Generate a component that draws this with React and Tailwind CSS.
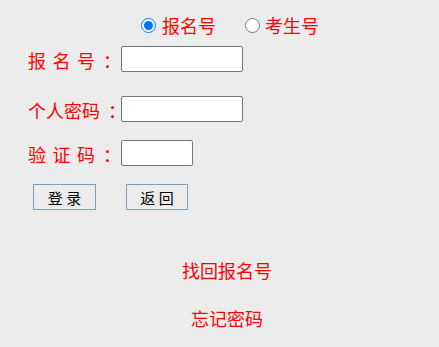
import { useState } from 'react';

// login form for the exam registration page
const Field = ({ chars, inputWidth }) => (
  <div className="flex items-center">
    <div className="flex items-center w-[93px] pt-[2px] text-[18px] leading-[18px] text-[#ff0000]">
      <div className="flex justify-between w-[72px]">
        {chars.map((c) => (
          <span key={c}>{c}</span>
        ))}
      </div>
      <span className="ml-[8px]">：</span>
    </div>
    <input
      type="text"
      className={`${inputWidth} h-[26px] bg-white border border-[#767676] rounded-[2px] outline-none px-1 text-sm`}
    />
  </div>
);

export default function App() {
  const [mode, setMode] = useState('bmh');

  return (
    <div className="min-h-screen bg-[#ececec] font-['Microsoft_YaHei','Noto_Sans_CJK_SC',sans-serif]">
      {/* 报名号 / 考生号 switch */}
      <div className="flex items-center pl-[141px] pt-[14px] h-[36px] text-[18px] leading-[18px] text-[#ff0000]">
        <label className="flex items-center">
          <input
            type="radio"
            name="mode"
            checked={mode === 'bmh'}
            onChange={() => setMode('bmh')}
            className="w-[15px] h-[15px] m-0 accent-[#0075ff]"
          />
          <span className="ml-[6px]">报名号</span>
        </label>
        <label className="flex items-center ml-[29px]">
          <input
            type="radio"
            name="mode"
            checked={mode === 'ksh'}
            onChange={() => setMode('ksh')}
            className="w-[15px] h-[15px] m-0 accent-[#0075ff]"
          />
          <span className="ml-[5px]">考生号</span>
        </label>
      </div>

      <div className="pl-[28px] pt-[10px]">
        <Field chars={['报', '名', '号']} inputWidth="w-[122px]" />
        <div className="mt-[24px]">
          <Field chars={['个', '人', '密', '码']} inputWidth="w-[122px]" />
        </div>
        <div className="mt-[18px]">
          <Field chars={['验', '证', '码']} inputWidth="w-[72px]" />
        </div>

        <div className="flex items-center gap-[30px] ml-[5px] mt-[18px]">
          <button className="w-[63px] h-[26px] border border-[#7f9db9] bg-[#ececec] text-[15px] leading-[15px] text-black">
            登 录
          </button>
          <button className="w-[62px] h-[26px] border border-[#7f9db9] bg-[#ececec] text-[15px] leading-[15px] text-black">
            返 回
          </button>
        </div>
      </div>

      <div className="flex flex-col items-center pl-[15px] mt-[51px] gap-[30px] text-[18px] leading-[18px] text-[#ff0000]">
        <a href="#" className="no-underline">找回报名号</a>
        <a href="#" className="no-underline">忘记密码</a>
      </div>
    </div>
  );
}
